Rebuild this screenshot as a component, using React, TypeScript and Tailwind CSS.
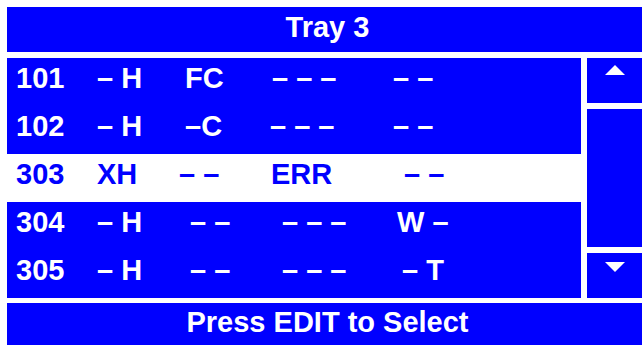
const font = { fontFamily: '"Liberation Sans", Arial, sans-serif' };

type Cell = { t: string; w: string };
type Row = { id: string; cells: Cell[]; selected?: boolean };

const rows: Row[] = [
  {
    id: "101",
    cells: [
      { t: "101", w: "w-[81px]" },
      { t: "– H", w: "w-[88px]" },
      { t: "FC", w: "w-[87px]" },
      { t: "– – –", w: "w-[121px]" },
      { t: "– –", w: "w-auto" },
    ],
  },
  {
    id: "102",
    cells: [
      { t: "102", w: "w-[81px]" },
      { t: "– H", w: "w-[88px]" },
      { t: "–C", w: "w-[85px]" },
      { t: "– – –", w: "w-[123px]" },
      { t: "– –", w: "w-auto" },
    ],
  },
  {
    id: "303",
    selected: true,
    cells: [
      { t: "303", w: "w-[81px]" },
      { t: "XH", w: "w-[82px]" },
      { t: "– –", w: "w-[92px]" },
      { t: "ERR", w: "w-[133px]" },
      { t: "– –", w: "w-auto" },
    ],
  },
  {
    id: "304",
    cells: [
      { t: "304", w: "w-[81px]" },
      { t: "– H", w: "w-[93px]" },
      { t: "– –", w: "w-[92px]" },
      { t: "– – –", w: "w-[115px]" },
      { t: "W –", w: "w-auto" },
    ],
  },
  {
    id: "305",
    cells: [
      { t: "305", w: "w-[81px]" },
      { t: "– H", w: "w-[93px]" },
      { t: "– –", w: "w-[92px]" },
      { t: "– – –", w: "w-[120px]" },
      { t: "– T", w: "w-auto" },
    ],
  },
];

function Arrow({ down }: { down?: boolean }) {
  return (
    <svg width="20" height="10" viewBox="0 0 20 10">
      <polygon points={down ? "0,0 20,0 10,10" : "10,0 20,10 0,10"} fill="#ffffff" />
    </svg>
  );
}

export default function App() {
  return (
    <div
      className="flex h-[345px] w-[642px] flex-col gap-[6px] overflow-hidden bg-white pl-[7px] pt-[7px] text-[29px] font-bold leading-none"
      style={font}
    >
      <div className="flex h-[45px] shrink-0 justify-center bg-[#0000ff] pl-[6px] pt-[6px] text-white">
        Tray 3
      </div>

      <div className="flex h-[240px] shrink-0 gap-[6px]">
        <div className="flex w-[574px] flex-col">
          {rows.map((r) => (
            <div
              key={r.id}
              className={`flex h-[48px] whitespace-pre pl-[9px] pt-[6px] ${
                r.selected ? "bg-white text-[#0000ff]" : "bg-[#0000ff] text-white"
              }`}
            >
              {r.cells.map((c, i) => (
                <span key={i} className={`shrink-0 ${c.w}`}>
                  {c.t}
                </span>
              ))}
            </div>
          ))}
        </div>

        <div className="flex flex-1 flex-col gap-[6px]">
          <div className="flex h-[45px] justify-center bg-[#0000ff] pt-[7px]">
            <Arrow />
          </div>
          <div className="flex-1 bg-[#0000ff]" />
          <div className="flex h-[45px] justify-center bg-[#0000ff] pt-[9px]">
            <Arrow down />
          </div>
        </div>
      </div>

      <div className="-mt-px flex h-[45px] shrink-0 justify-center bg-[#0000ff] pl-[6px] pt-[5px] text-white">
        Press EDIT to Select
      </div>
    </div>
  );
}
